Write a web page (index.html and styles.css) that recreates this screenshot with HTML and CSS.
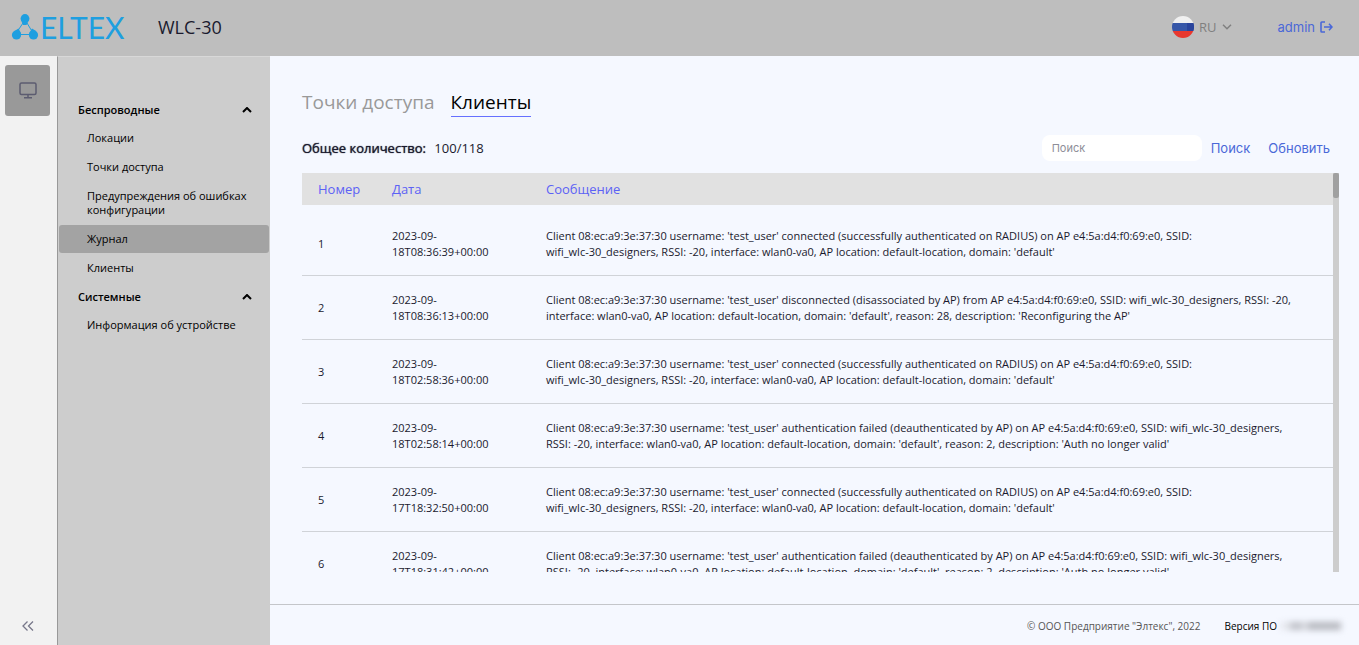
FILE: index.html
```html
<!DOCTYPE html>
<html lang="ru">
<head>
    <meta charset="UTF-8">
    <meta name="viewport" content="width=device-width, initial-scale=1.0">
    <title>WLC-30</title>
    <link rel="stylesheet" href="styles.css">
</head>
<body>
    <header class="header">
        <a class="logo" href="#">
            <svg class="logo-mark" width="28" height="28" viewBox="0 0 28 28" fill="#1e9fe0">
                <path d="M12 10L6 19M16 10l6 10M9 21.500h9" stroke="#1e9fe0" stroke-width="1" fill="none"/>
                <circle cx="14" cy="5.500" r="4.400"/>
                <path d="M9.800 6.500l2.200 5.500h3.500l2.700-5.500z"/>
                <circle cx="5.500" cy="22" r="4.600"/>
                <path d="M3.500 18l4-2.500 2.500 4.500-1 4.500z"/>
                <circle cx="22.500" cy="22" r="4.600"/>
                <path d="M25 18l-4-2.500-2.800 4.500 1 4.500z"/>
            </svg>
            <span class="logo-text">ELTEX</span>
        </a>
        <h1 class="device">WLC-30</h1>
        <button class="lang" type="button">
            <svg width="22" height="22" viewBox="0 0 22 22">
                <clipPath id="flag"><circle cx="11" cy="11" r="11"/></clipPath>
                <g clip-path="url(#flag)">
                    <path fill="#f0f0f0" d="M0 0h22v7H0z"/>
                    <path fill="#3757a8" d="M0 7h22v8H0z"/>
                    <path fill="#2a449c" d="M15 7h7v8h-7z"/>
                    <path fill="#e8382f" d="M0 15h22v7H0z"/>
                </g>
            </svg>
            <span>RU</span>
            <svg width="10" height="6" viewBox="0 0 10 6" fill="none" stroke="#808080" stroke-width="1.500"><path d="M1 .8l4 4 4-4"/></svg>
        </button>
        <a class="user" href="#">
            <span>admin</span>
            <svg width="13" height="12" viewBox="0 0 13 12" fill="none" stroke="#4a68d8" stroke-width="1.600">
                <path d="M5 1H1.800Q1 1 1 1.800v8.400q0 .8.800.8H5M4 6h8M9 2.800L12 6 9 9.200"/>
            </svg>
        </a>
    </header>

    <div class="layout">
        <aside class="rail">
            <button class="rail-btn" type="button" aria-label="Мониторинг">
                <svg width="18" height="17" viewBox="0 0 18 17" fill="none" stroke="#5c5c70" stroke-width="1.500">
                    <rect x="1" y="1" width="16" height="11.500" rx="1.500"/>
                    <path d="M9 12.500v3M5 15.800h8"/>
                </svg>
            </button>
            <button class="rail-collapse" type="button" aria-label="Свернуть">
                <svg width="12" height="10" viewBox="0 0 12 10" fill="none" stroke="#77778a" stroke-width="1.300"><path d="M5.500.5L1 5l4.500 4.500M11 .5L6.500 5 11 9.500"/></svg>
            </button>
        </aside>

        <nav class="menu">
            <button class="menu-title" type="button">
                Беспроводные
                <svg width="10" height="6" viewBox="0 0 10 6" fill="none" stroke="#000" stroke-width="2"><path d="M1 5l4-4 4 4"/></svg>
            </button>
            <a class="menu-item" href="#">Локации</a>
            <a class="menu-item" href="#">Точки доступа</a>
            <a class="menu-item" href="#">Предупреждения об ошибках конфигурации</a>
            <a class="menu-item active" href="#">Журнал</a>
            <a class="menu-item" href="#">Клиенты</a>
            <button class="menu-title" type="button">
                Системные
                <svg width="10" height="6" viewBox="0 0 10 6" fill="none" stroke="#000" stroke-width="2"><path d="M1 5l4-4 4 4"/></svg>
            </button>
            <a class="menu-item" href="#">Информация об устройстве</a>
        </nav>

        <div class="page">
            <main class="content">
                <div class="tabs">
                    <a class="tab" href="#">Точки доступа</a>
                    <a class="tab active" href="#">Клиенты</a>
                </div>

                <div class="toolbar">
                    <p class="total"><b>Общее количество:</b> <span>100/118</span></p>
                    <input class="search" type="text" placeholder="Поиск" aria-label="Поиск">
                    <button class="link-btn" type="button">Поиск</button>
                    <button class="link-btn" type="button">Обновить</button>
                </div>

                <div class="journal">
                    <div class="table-wrap">
                        <table class="table">
                            <thead>
                                <tr>
                                    <th class="col-num">Номер</th>
                                    <th class="col-date">Дата</th>
                                    <th>Сообщение</th>
                                </tr>
                            </thead>
                            <tbody>
                                <tr class="spacer"><td colspan="3"></td></tr>
                                <tr>
                                    <td>1</td>
                                    <td>2023-09-18T08:36:39+00:00</td>
                                    <td>Client 08:ec:a9:3e:37:30 username: 'test_user' connected (successfully authenticated on RADIUS) on AP e4:5a:d4:f0:69:e0, SSID: <span class="ssid">wifi_wlc-30_designers,</span> RSSI: -20, interface: wlan0-va0, AP location: default-location, domain: 'default'</td>
                                </tr>
                                <tr>
                                    <td>2</td>
                                    <td>2023-09-18T08:36:13+00:00</td>
                                    <td>Client 08:ec:a9:3e:37:30 username: 'test_user' disconnected (disassociated by AP) from AP e4:5a:d4:f0:69:e0, SSID: <span class="ssid">wifi_wlc-30_designers,</span> RSSI: -20, interface: wlan0-va0, AP location: default-location, domain: 'default', reason: 28, description: 'Reconfiguring the AP'</td>
                                </tr>
                                <tr>
                                    <td>3</td>
                                    <td>2023-09-18T02:58:36+00:00</td>
                                    <td>Client 08:ec:a9:3e:37:30 username: 'test_user' connected (successfully authenticated on RADIUS) on AP e4:5a:d4:f0:69:e0, SSID: <span class="ssid">wifi_wlc-30_designers,</span> RSSI: -20, interface: wlan0-va0, AP location: default-location, domain: 'default'</td>
                                </tr>
                                <tr>
                                    <td>4</td>
                                    <td>2023-09-18T02:58:14+00:00</td>
                                    <td>Client 08:ec:a9:3e:37:30 username: 'test_user' authentication failed (deauthenticated by AP) on AP e4:5a:d4:f0:69:e0, SSID: <span class="ssid">wifi_wlc-30_designers,</span> RSSI: -20, interface: wlan0-va0, AP location: default-location, domain: 'default', reason: 2, description: 'Auth no longer valid'</td>
                                </tr>
                                <tr>
                                    <td>5</td>
                                    <td>2023-09-17T18:32:50+00:00</td>
                                    <td>Client 08:ec:a9:3e:37:30 username: 'test_user' connected (successfully authenticated on RADIUS) on AP e4:5a:d4:f0:69:e0, SSID: <span class="ssid">wifi_wlc-30_designers,</span> RSSI: -20, interface: wlan0-va0, AP location: default-location, domain: 'default'</td>
                                </tr>
                                <tr>
                                    <td>6</td>
                                    <td>2023-09-17T18:31:42+00:00</td>
                                    <td>Client 08:ec:a9:3e:37:30 username: 'test_user' authentication failed (deauthenticated by AP) on AP e4:5a:d4:f0:69:e0, SSID: <span class="ssid">wifi_wlc-30_designers,</span> RSSI: -20, interface: wlan0-va0, AP location: default-location, domain: 'default', reason: 2, description: 'Auth no longer valid'</td>
                                </tr>
                            </tbody>
                        </table>
                    </div>
                    <div class="scrollbar"><div class="scrollbar-thumb"></div></div>
                </div>
            </main>

            <footer class="footer">
                <span class="copyright">© ООО Предприятие "Элтекс", 2022</span>
                <span class="version">Версия ПО <i class="version-hidden"></i></span>
            </footer>
        </div>
    </div>
</body>
</html>
```
FILE: styles.css
```css
* {
    margin: 0;
    padding: 0;
    box-sizing: border-box;
}

body {
    display: flex;
    flex-direction: column;
    height: 100vh;
    font-family: 'Open Sans', 'Noto Sans', sans-serif;
    font-size: 11px;
    color: #1a1a2e;
    background: #f5f8ff;
    overflow: hidden;
}

a {
    color: inherit;
    text-decoration: none;
}

button {
    border: none;
    background: none;
    font: inherit;
    color: inherit;
    cursor: pointer;
}

svg {
    display: block;
    flex: none;
}

/* Header */
.header {
    display: flex;
    align-items: center;
    flex: none;
    height: 56px;
    padding: 0 26px 2px 11px;
    background: #bebebe;
}

.logo {
    display: flex;
    align-items: center;
    gap: 1px;
    width: 147px;
    color: #1e9fe0;
}

.logo-text {
    font-family: Lato, sans-serif;
    font-size: 30px;
    line-height: 32px;
}

.device {
    margin-right: auto;
    font-size: 18px;
    font-weight: 400;
}

.lang {
    display: flex;
    align-items: center;
    gap: 5px;
    margin-right: 46px;
    font-size: 13px;
    color: #808080;
}

.user {
    display: flex;
    align-items: center;
    gap: 5px;
    font-family: Inter, sans-serif;
    font-size: 13px;
    color: #4a68d8;
}

/* Layout */
.layout {
    display: flex;
    flex: 1;
    min-height: 0;
}

.rail {
    display: flex;
    flex-direction: column;
    align-items: center;
    justify-content: space-between;
    flex: none;
    width: 57px;
    padding: 9px 7px 14px 5px;
    background: #f2f2f2;
}

.rail-btn {
    display: flex;
    align-items: center;
    justify-content: center;
    width: 45px;
    height: 51px;
    border-radius: 3px;
    background: #999;
}

.menu {
    flex: none;
    width: 213px;
    padding: 39px 1px 0;
    border-left: 1px solid #999;
    border-top: 1px solid #d8d8d8;
    background: #cdcdcd;
    color: #000;
}

.menu-title {
    display: flex;
    align-items: center;
    justify-content: space-between;
    width: 100%;
    padding: 7px 17px 7px 19px;
    line-height: 14px;
    font-weight: 600;
}

.menu-item {
    display: block;
    margin-bottom: 1px;
    padding: 7px 16px 7px 28px;
    border-radius: 3px;
    line-height: 14px;
}

.menu-item.active {
    background: #a3a3a3;
}

/* Page */
.page {
    display: flex;
    flex-direction: column;
    flex: 1;
    min-width: 0;
}

.content {
    display: flex;
    flex-direction: column;
    flex: 1;
    min-height: 0;
    padding: 32px 20px 32px 32px;
}

.tabs {
    display: flex;
    gap: 16px;
    font-size: 19px;
    line-height: 28px;
}

.tab {
    color: #999;
}

.tab.active {
    color: #000;
    border-bottom: 1px solid #6670ff;
}

.toolbar {
    display: flex;
    align-items: center;
    margin: 18px 0 12px;
    padding-right: 9px;
}

.total {
    margin-right: auto;
    font-size: 13px;
}

.total b {
    margin-right: 5px;
    font-weight: 400;
    text-shadow: 0 0 1px currentColor;
}

.search {
    width: 160px;
    height: 26px;
    padding: 0 10px;
    border: none;
    border-radius: 8px;
    background: #fff;
    font-family: Inter, sans-serif;
    font-size: 11px;
}

.search::placeholder {
    color: #8e8e98;
}

.link-btn {
    margin-left: 9px;
    font-family: Inter, sans-serif;
    font-size: 13px;
    color: #4a68d8;
}

.link-btn + .link-btn {
    margin-left: 18px;
}

/* Journal table */
.journal {
    display: flex;
    flex: 1;
    min-height: 0;
}

.table-wrap {
    flex: 1;
    overflow: hidden;
}

.table {
    width: 100%;
    table-layout: fixed;
    border-collapse: separate;
    border-spacing: 0;
}

.col-num {
    width: 74px;
}

.col-date {
    width: 154px;
}

.table th {
    height: 32px;
    padding: 0 16px;
    background: #e1e1e1;
    font-size: 13px;
    font-weight: 400;
    text-align: left;
    color: #5c62f5;
}

.table td {
    height: 64px;
    padding: 0 16px;
    border-bottom: 1px solid #d0d3d8;
    line-height: 16px;
    overflow-wrap: break-word;
}

.table td:last-child {
    padding-right: 32px;
}

.table .spacer td {
    height: 7px;
    border: none;
}

.ssid {
    white-space: nowrap;
}

.scrollbar {
    flex: none;
    width: 6px;
    background: #cdcdcd;
}

.scrollbar-thumb {
    height: 25px;
    border-radius: 2px;
    background: #a0a0a0;
}

/* Footer */
.footer {
    display: flex;
    align-items: center;
    justify-content: flex-end;
    gap: 24px;
    flex: none;
    height: 41px;
    padding: 2px 18px 0 0;
    border-top: 1px solid #c4c6ca;
    font-size: 10px;
}

.copyright {
    color: #555;
}

.version {
    display: flex;
    align-items: center;
    gap: 4px;
    color: #000;
}

/* version number is blurred out */
.version-hidden {
    width: 60px;
    height: 8px;
    background: linear-gradient(90deg, #e4e6ec 8px, #bfc1c8 10px 20px, #e4e6ec 24px, #b6b8bf 28px);
    filter: blur(3px);
}
```
